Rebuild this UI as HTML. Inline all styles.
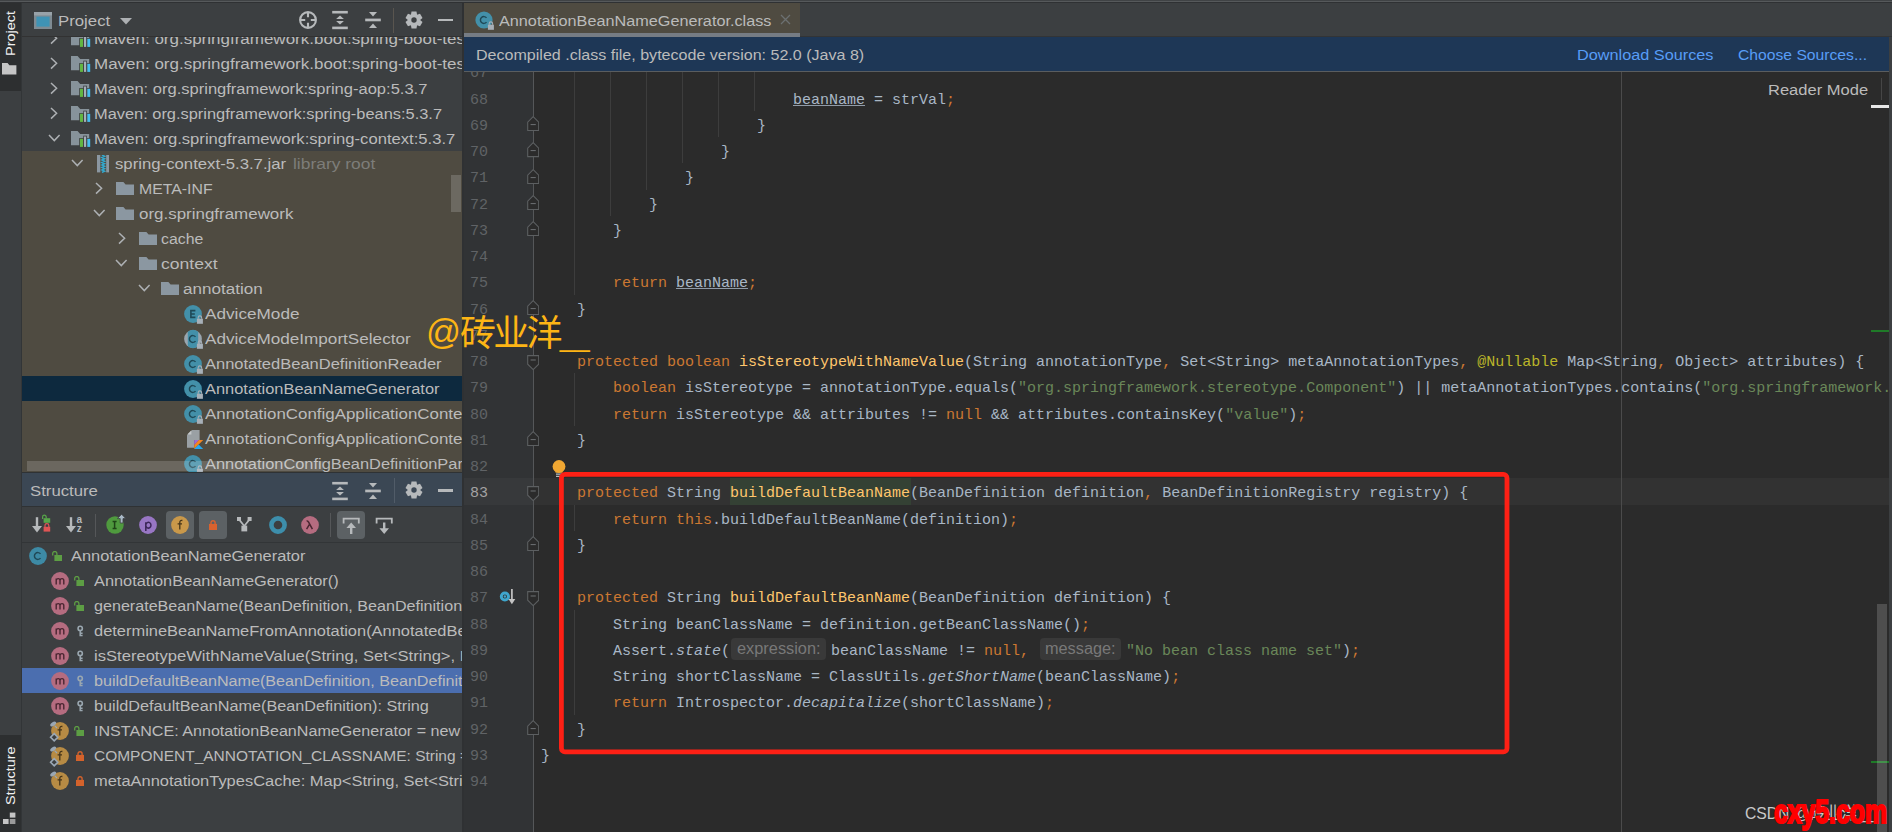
<!DOCTYPE html>
<html lang="en"><head><meta charset="utf-8"><title>AnnotationBeanNameGenerator.class</title>
<style>
html,body{margin:0;padding:0}
body{width:1892px;height:832px;overflow:hidden;background:#3c3f41;position:relative;font-family:"Liberation Sans",sans-serif}
.t{position:absolute;white-space:nowrap;line-height:20px;height:20px;transform-origin:0 50%;font-family:"Liberation Sans",sans-serif}
.vt{position:absolute;white-space:nowrap;font-size:13.5px;line-height:20px;height:20px;transform-origin:0 0;transform:rotate(-90deg) scaleX(1.07);font-family:"Liberation Sans",sans-serif}
.cl{position:absolute;white-space:pre;font-family:"Liberation Mono",monospace;font-size:15px;line-height:26px;height:26px;color:#a9b7c6}
.k{color:#cc7832}.m{color:#ffc66d}.s{color:#6a8759}.a{color:#bbb529}.u{text-decoration:underline;text-underline-offset:1px;text-decoration-thickness:1px;text-decoration-color:#909ba8}.i{font-style:italic}
.wm{position:absolute;white-space:nowrap;font-family:"Liberation Sans","Noto Sans CJK SC",sans-serif}
.imp{position:absolute;white-space:nowrap;font-family:"Liberation Sans",sans-serif;font-weight:bold;font-size:33px;line-height:44px;color:#ff0000;-webkit-text-stroke:2.2px #ff0000;transform-origin:0 50%}
</style></head>
<body>
<div style="position:absolute;left:0px;top:0px;width:1892px;height:1px;background:#404345;"></div><div style="position:absolute;left:0px;top:1px;width:1892px;height:1px;background:#56595b;"></div><div style="position:absolute;left:0px;top:2px;width:1892px;height:1px;background:#2f3133;"></div><div style="position:absolute;left:0px;top:3px;width:21px;height:88px;background:#2d2f30;"></div><div style="position:absolute;left:21px;top:3px;width:1px;height:829px;background:#323537;"></div><div style="position:absolute;left:0px;top:735px;width:21px;height:97px;background:#2d2f30;"></div><div class="vt" style="left:1px;top:56px;width:46px;color:#f0f0f0">Project</div><svg style="position:absolute;left:2.4px;top:63.4px;" width="14.4" height="11.6" viewBox="0 0 14.4 11.6"><path d="M0,0 H5.6 L7.4,2.3 H14.4 V11.6 H0 Z" fill="#c5c5c5"/></svg><div class="vt" style="left:1px;top:805px;width:58px;color:#f0f0f0">Structure</div><svg style="position:absolute;left:3px;top:812px;" width="12.6" height="12" viewBox="0 0 12.6 12"><rect x="0" y="7" width="5.6" height="5" fill="#c5c5c5"/><rect x="6.8" y="7" width="5.6" height="5" fill="#9a9a9a"/><rect x="6.8" y="0.6" width="5.6" height="5" fill="#c5c5c5"/></svg><div style="position:absolute;left:22px;top:36px;width:440px;height:1px;background:#323232;"></div><svg style="position:absolute;left:34px;top:12px;" width="18" height="17" viewBox="0 0 18 17"><rect x="0" y="0" width="18" height="17" fill="#7f8b93"/><rect x="0" y="0" width="18" height="3.4" fill="#98a2a9"/><rect x="2.4" y="4.6" width="13.2" height="10" fill="#3f93b5"/></svg><div class="t " style="left:57.8px;top:11px;font-size:15.5px;color:#bbbbbb;transform:scaleX(1.0819);">Project</div><svg style="position:absolute;left:120px;top:17.8px;" width="12" height="7" viewBox="0 0 12 7"><path d="M0,0 H12 L6,6.6 Z" fill="#adb0b3"/></svg><svg style="position:absolute;left:298px;top:9.6px;" width="20" height="20" viewBox="0 0 20 20"><circle cx="10" cy="10" r="7.9" fill="none" stroke="#b6b9bb" stroke-width="2.1"/><path d="M10,2.4 V7.2 M10,12.8 V17.6 M2.4,10 H7.2 M12.8,10 H17.6" stroke="#b6b9bb" stroke-width="2.1"/></svg><svg style="position:absolute;left:331px;top:10px;" width="18" height="20" viewBox="0 0 18 20"><rect x="1.2" y="0.9" width="15.6" height="2.6" fill="#b6b9bb"/><rect x="1.2" y="16.6" width="15.6" height="2.6" fill="#b6b9bb"/><path d="M9,5.4 L12.9,8.9 H5.1 Z" fill="#b6b9bb"/><path d="M9,14.6 L12.9,11.1 H5.1 Z" fill="#b6b9bb"/></svg><svg style="position:absolute;left:364px;top:10px;" width="18" height="20" viewBox="0 0 18 20"><rect x="1.2" y="8.6" width="15.6" height="2.7" fill="#b6b9bb"/><path d="M9,6.4 L13,2.1 H5 Z" fill="#b6b9bb"/><path d="M9,13.6 L13,17.9 H5 Z" fill="#b6b9bb"/></svg><div style="position:absolute;left:393.4px;top:8px;width:1px;height:25px;background:#59554f;"></div><svg style="position:absolute;left:404px;top:9.899999999999999px;" width="20" height="20" viewBox="0 0 20 20"><g transform="translate(10,10)"><path d="M-2.5,-8.4 H2.5 L3.2,-4.5 H-3.2 Z" fill="#b6b9bb" transform="rotate(0)"/><path d="M-2.5,-8.4 H2.5 L3.2,-4.5 H-3.2 Z" fill="#b6b9bb" transform="rotate(60)"/><path d="M-2.5,-8.4 H2.5 L3.2,-4.5 H-3.2 Z" fill="#b6b9bb" transform="rotate(120)"/><path d="M-2.5,-8.4 H2.5 L3.2,-4.5 H-3.2 Z" fill="#b6b9bb" transform="rotate(180)"/><path d="M-2.5,-8.4 H2.5 L3.2,-4.5 H-3.2 Z" fill="#b6b9bb" transform="rotate(240)"/><path d="M-2.5,-8.4 H2.5 L3.2,-4.5 H-3.2 Z" fill="#b6b9bb" transform="rotate(300)"/><circle r="6.1" fill="#b6b9bb"/><circle r="2.7" fill="#3c3f41"/></g></svg><div style="position:absolute;left:437.8px;top:18.6px;width:15.7px;height:2.6px;background:#b6b9bb;"></div><div style="position:absolute;left:22px;top:37px;width:440px;height:435px;overflow:hidden"><div style="position:absolute;left:0px;top:114px;width:440px;height:321px;background:#4f4b41;"></div><div style="position:absolute;left:0px;top:339px;width:440px;height:25px;background:#0d293e;"></div><svg style="position:absolute;left:27.2px;top:-6.1px;" width="9.6" height="14.6" viewBox="0 0 9.6 14.6"><polyline points="2,2 7.6,7.3 2,12.6" fill="none" stroke="#adb0b3" stroke-width="1.5"/></svg><svg style="position:absolute;left:48.9px;top:-6.0px;" width="20" height="16.8" viewBox="0 0 20 16.8"><path d="M0,0 H6.6 L9.2,2.9 H18.2 V14.2 H0 Z" fill="#87939b"/><rect x="8.2" y="7.1" width="4.6" height="9.6" fill="#3c3f41"/><rect x="12.3" y="4.7" width="3.6" height="12" fill="#3c3f41"/><rect x="15.5" y="7.1" width="4.5" height="9.6" fill="#3c3f41"/><rect x="8.95" y="7.8" width="3.05" height="8.1" fill="#62b543"/><rect x="13.0" y="5.5" width="2.15" height="10.4" fill="#a4b0b9"/><rect x="16.3" y="7.8" width="2.9" height="8.1" fill="#44bdf0"/></svg><div class="t " style="left:72.2px;top:-8px;font-size:15.5px;color:#bbbbbb;transform:scaleX(1.0958);">Maven: org.springframework.boot:spring-boot-test-autoconfigure:2.5.0</div><svg style="position:absolute;left:27.2px;top:18.9px;" width="9.6" height="14.6" viewBox="0 0 9.6 14.6"><polyline points="2,2 7.6,7.3 2,12.6" fill="none" stroke="#adb0b3" stroke-width="1.5"/></svg><svg style="position:absolute;left:48.9px;top:19.0px;" width="20" height="16.8" viewBox="0 0 20 16.8"><path d="M0,0 H6.6 L9.2,2.9 H18.2 V14.2 H0 Z" fill="#87939b"/><rect x="8.2" y="7.1" width="4.6" height="9.6" fill="#3c3f41"/><rect x="12.3" y="4.7" width="3.6" height="12" fill="#3c3f41"/><rect x="15.5" y="7.1" width="4.5" height="9.6" fill="#3c3f41"/><rect x="8.95" y="7.8" width="3.05" height="8.1" fill="#62b543"/><rect x="13.0" y="5.5" width="2.15" height="10.4" fill="#a4b0b9"/><rect x="16.3" y="7.8" width="2.9" height="8.1" fill="#44bdf0"/></svg><div class="t " style="left:72.2px;top:17px;font-size:15.5px;color:#bbbbbb;transform:scaleX(1.0958);">Maven: org.springframework.boot:spring-boot-test-autoconfigure:2.5.0</div><svg style="position:absolute;left:27.2px;top:43.900000000000006px;" width="9.6" height="14.6" viewBox="0 0 9.6 14.6"><polyline points="2,2 7.6,7.3 2,12.6" fill="none" stroke="#adb0b3" stroke-width="1.5"/></svg><svg style="position:absolute;left:48.9px;top:44.0px;" width="20" height="16.8" viewBox="0 0 20 16.8"><path d="M0,0 H6.6 L9.2,2.9 H18.2 V14.2 H0 Z" fill="#87939b"/><rect x="8.2" y="7.1" width="4.6" height="9.6" fill="#3c3f41"/><rect x="12.3" y="4.7" width="3.6" height="12" fill="#3c3f41"/><rect x="15.5" y="7.1" width="4.5" height="9.6" fill="#3c3f41"/><rect x="8.95" y="7.8" width="3.05" height="8.1" fill="#62b543"/><rect x="13.0" y="5.5" width="2.15" height="10.4" fill="#a4b0b9"/><rect x="16.3" y="7.8" width="2.9" height="8.1" fill="#44bdf0"/></svg><div class="t " style="left:72.2px;top:42px;font-size:15.5px;color:#bbbbbb;transform:scaleX(1.0661);">Maven: org.springframework:spring-aop:5.3.7</div><svg style="position:absolute;left:27.2px;top:68.9px;" width="9.6" height="14.6" viewBox="0 0 9.6 14.6"><polyline points="2,2 7.6,7.3 2,12.6" fill="none" stroke="#adb0b3" stroke-width="1.5"/></svg><svg style="position:absolute;left:48.9px;top:69.0px;" width="20" height="16.8" viewBox="0 0 20 16.8"><path d="M0,0 H6.6 L9.2,2.9 H18.2 V14.2 H0 Z" fill="#87939b"/><rect x="8.2" y="7.1" width="4.6" height="9.6" fill="#3c3f41"/><rect x="12.3" y="4.7" width="3.6" height="12" fill="#3c3f41"/><rect x="15.5" y="7.1" width="4.5" height="9.6" fill="#3c3f41"/><rect x="8.95" y="7.8" width="3.05" height="8.1" fill="#62b543"/><rect x="13.0" y="5.5" width="2.15" height="10.4" fill="#a4b0b9"/><rect x="16.3" y="7.8" width="2.9" height="8.1" fill="#44bdf0"/></svg><div class="t " style="left:72.2px;top:67px;font-size:15.5px;color:#bbbbbb;transform:scaleX(1.0574);">Maven: org.springframework:spring-beans:5.3.7</div><svg style="position:absolute;left:24.7px;top:96.2px;" width="14.6" height="9.6" viewBox="0 0 14.6 9.6"><polyline points="2,2 7.3,7.6 12.6,2" fill="none" stroke="#adb0b3" stroke-width="1.5"/></svg><svg style="position:absolute;left:48.9px;top:94.0px;" width="20" height="16.8" viewBox="0 0 20 16.8"><path d="M0,0 H6.6 L9.2,2.9 H18.2 V14.2 H0 Z" fill="#87939b"/><rect x="8.2" y="7.1" width="4.6" height="9.6" fill="#3c3f41"/><rect x="12.3" y="4.7" width="3.6" height="12" fill="#3c3f41"/><rect x="15.5" y="7.1" width="4.5" height="9.6" fill="#3c3f41"/><rect x="8.95" y="7.8" width="3.05" height="8.1" fill="#62b543"/><rect x="13.0" y="5.5" width="2.15" height="10.4" fill="#a4b0b9"/><rect x="16.3" y="7.8" width="2.9" height="8.1" fill="#44bdf0"/></svg><div class="t " style="left:72.2px;top:92px;font-size:15.5px;color:#bbbbbb;transform:scaleX(1.0726);">Maven: org.springframework:spring-context:5.3.7</div><svg style="position:absolute;left:47.7px;top:121.2px;" width="14.6" height="9.6" viewBox="0 0 14.6 9.6"><polyline points="2,2 7.3,7.6 12.6,2" fill="none" stroke="#adb0b3" stroke-width="1.5"/></svg><svg style="position:absolute;left:75px;top:118.19999999999999px;" width="12.4" height="17.4" viewBox="0 0 12.4 17.4"><rect x="0" y="0" width="3.3" height="17.4" fill="#8b97a1"/><rect x="9.2" y="0" width="3.1" height="17.4" fill="#8b97a1"/><path d="M4.9,0 L4.9,0.00 L7.6,1.24 L4.9,2.49 L7.6,3.73 L4.9,4.97 L7.6,6.21 L4.9,7.46 L7.6,8.70 L4.9,9.94 L7.6,11.19 L4.9,12.43 L7.6,13.67 L4.9,14.91 L7.6,16.16 L4.9,17.40 " fill="none" stroke="#35a8cc" stroke-width="1.5"/></svg><div class="t " style="left:93.4px;top:117px;font-size:15.5px;color:#bbbbbb;transform:scaleX(1.0799);">spring-context-5.3.7.jar</div><div class="t " style="left:271.4px;top:117px;font-size:15.5px;color:#7d7d79;transform:scaleX(1.1240);">library root</div><svg style="position:absolute;left:72.2px;top:143.89999999999998px;" width="9.6" height="14.6" viewBox="0 0 9.6 14.6"><polyline points="2,2 7.6,7.3 2,12.6" fill="none" stroke="#adb0b3" stroke-width="1.5"/></svg><svg style="position:absolute;left:94px;top:144.5px;" width="18.2" height="13.6" viewBox="0 0 18.2 13.6"><path d="M0,0 H7.4 L9.6,2.6 H18.2 V13.6 H0 Z" fill="#8b97a1"/></svg><div class="t " style="left:116.6px;top:142px;font-size:15.5px;color:#bbbbbb;transform:scaleX(1.0216);">META-INF</div><svg style="position:absolute;left:69.7px;top:171.2px;" width="14.6" height="9.6" viewBox="0 0 14.6 9.6"><polyline points="2,2 7.3,7.6 12.6,2" fill="none" stroke="#adb0b3" stroke-width="1.5"/></svg><svg style="position:absolute;left:94px;top:169.5px;" width="18.2" height="13.6" viewBox="0 0 18.2 13.6"><path d="M0,0 H7.4 L9.6,2.6 H18.2 V13.6 H0 Z" fill="#8b97a1"/></svg><div class="t " style="left:116.6px;top:167px;font-size:15.5px;color:#bbbbbb;transform:scaleX(1.0929);">org.springframework</div><svg style="position:absolute;left:94.7px;top:193.89999999999998px;" width="9.6" height="14.6" viewBox="0 0 9.6 14.6"><polyline points="2,2 7.6,7.3 2,12.6" fill="none" stroke="#adb0b3" stroke-width="1.5"/></svg><svg style="position:absolute;left:116.6px;top:194.5px;" width="18.2" height="13.6" viewBox="0 0 18.2 13.6"><path d="M0,0 H7.4 L9.6,2.6 H18.2 V13.6 H0 Z" fill="#8b97a1"/></svg><div class="t " style="left:138.6px;top:192px;font-size:15.5px;color:#bbbbbb;transform:scaleX(1.0248);">cache</div><svg style="position:absolute;left:92.2px;top:221.2px;" width="14.6" height="9.6" viewBox="0 0 14.6 9.6"><polyline points="2,2 7.3,7.6 12.6,2" fill="none" stroke="#adb0b3" stroke-width="1.5"/></svg><svg style="position:absolute;left:116.6px;top:219.5px;" width="18.2" height="13.6" viewBox="0 0 18.2 13.6"><path d="M0,0 H7.4 L9.6,2.6 H18.2 V13.6 H0 Z" fill="#8b97a1"/></svg><div class="t " style="left:138.6px;top:217px;font-size:15.5px;color:#bbbbbb;transform:scaleX(1.1324);">context</div><svg style="position:absolute;left:114.7px;top:246.2px;" width="14.6" height="9.6" viewBox="0 0 14.6 9.6"><polyline points="2,2 7.3,7.6 12.6,2" fill="none" stroke="#adb0b3" stroke-width="1.5"/></svg><svg style="position:absolute;left:139.2px;top:244.5px;" width="18.2" height="13.6" viewBox="0 0 18.2 13.6"><path d="M0,0 H7.4 L9.6,2.6 H18.2 V13.6 H0 Z" fill="#8b97a1"/></svg><div class="t " style="left:161.4px;top:242px;font-size:15.5px;color:#bbbbbb;transform:scaleX(1.1007);">annotation</div><svg style="position:absolute;left:159px;top:265.0px;" width="24" height="24" viewBox="0 0 24 24"><circle cx="12" cy="12" r="8.9" fill="#4390a9"/><path d="M14.4,8.6 H9.9 V15.4 H14.4 M9.9,12 H13.8" fill="none" stroke="#1f4856" stroke-width="1.6"/><path d="M17.2,16.8 V15.6 a1.7,1.7 0 0 1 3.4,0 V16.8" fill="none" stroke="#a7b0b8" stroke-width="1.1"/><rect x="15.9" y="16.7" width="6" height="5.1" fill="#a7b0b8"/></svg><div class="t " style="left:183.3px;top:267px;font-size:15.5px;color:#bbbbbb;transform:scaleX(1.1079);">AdviceMode</div><svg style="position:absolute;left:159px;top:290.0px;" width="24" height="24" viewBox="0 0 24 24"><circle cx="12" cy="12" r="8.9" fill="#9aa5ae"/><path d="M6.8,4.699999999999999 A8.9,8.9 0 0 1 17.2,4.699999999999999 V19.299999999999997 A8.9,8.9 0 0 1 6.8,19.299999999999997 Z" fill="#4390a9"/><path d="M14.5,9.9 A3.4,3.4 0 1 0 14.5,14.1" fill="none" stroke="#1f4856" stroke-width="1.45"/><path d="M17.2,16.8 V15.6 a1.7,1.7 0 0 1 3.4,0 V16.8" fill="none" stroke="#a7b0b8" stroke-width="1.1"/><rect x="15.9" y="16.7" width="6" height="5.1" fill="#a7b0b8"/></svg><div class="t " style="left:183.3px;top:292px;font-size:15.5px;color:#bbbbbb;transform:scaleX(1.1054);">AdviceModeImportSelector</div><svg style="position:absolute;left:159px;top:315.0px;" width="24" height="24" viewBox="0 0 24 24"><circle cx="12" cy="12" r="8.9" fill="#4390a9"/><path d="M14.5,9.9 A3.4,3.4 0 1 0 14.5,14.1" fill="none" stroke="#1f4856" stroke-width="1.45"/><path d="M17.2,16.8 V15.6 a1.7,1.7 0 0 1 3.4,0 V16.8" fill="none" stroke="#a7b0b8" stroke-width="1.1"/><rect x="15.9" y="16.7" width="6" height="5.1" fill="#a7b0b8"/></svg><div class="t " style="left:183.3px;top:317px;font-size:15.5px;color:#bbbbbb;transform:scaleX(1.0642);">AnnotatedBeanDefinitionReader</div><svg style="position:absolute;left:159px;top:340.0px;" width="24" height="24" viewBox="0 0 24 24"><circle cx="12" cy="12" r="8.9" fill="#4390a9"/><path d="M14.5,9.9 A3.4,3.4 0 1 0 14.5,14.1" fill="none" stroke="#1f4856" stroke-width="1.45"/><path d="M17.2,16.8 V15.6 a1.7,1.7 0 0 1 3.4,0 V16.8" fill="none" stroke="#a7b0b8" stroke-width="1.1"/><rect x="15.9" y="16.7" width="6" height="5.1" fill="#a7b0b8"/></svg><div class="t " style="left:183.3px;top:342px;font-size:15.5px;color:#bbbbbb;transform:scaleX(1.0589);">AnnotationBeanNameGenerator</div><svg style="position:absolute;left:159px;top:365.0px;" width="24" height="24" viewBox="0 0 24 24"><circle cx="12" cy="12" r="8.9" fill="#4390a9"/><path d="M14.5,9.9 A3.4,3.4 0 1 0 14.5,14.1" fill="none" stroke="#1f4856" stroke-width="1.45"/><path d="M17.2,16.8 V15.6 a1.7,1.7 0 0 1 3.4,0 V16.8" fill="none" stroke="#a7b0b8" stroke-width="1.1"/><rect x="15.9" y="16.7" width="6" height="5.1" fill="#a7b0b8"/></svg><div class="t " style="left:183.3px;top:367px;font-size:15.5px;color:#bbbbbb;transform:scaleX(1.0901);">AnnotationConfigApplicationContext</div><svg style="position:absolute;left:164.7px;top:393.1px;" width="17" height="19.2" viewBox="0 0 17 19.2"><path d="M5.2,0 H12.6 V10 H7 V17.8 H0 V5.2 Z" fill="#9aa0a4"/><path d="M4.4,0.2 V4.4 H0.2 Z" fill="#c3c7ca"/><g transform="translate(7.2,10)"><path d="M4.5,0 L0,4.75 V9 L4.5,4.4 L9,0 Z" fill="#f5841f"/><path d="M0,0 H4.5 L0,4.9 Z" fill="#9d6bd6"/><path d="M0,9 L4.5,4.4 L9,9 Z" fill="#27a7ee"/></g></svg><div class="t " style="left:183.3px;top:392px;font-size:15.5px;color:#bbbbbb;transform:scaleX(1.0901);">AnnotationConfigApplicationContextExtensionsKt</div><svg style="position:absolute;left:159px;top:415.0px;" width="24" height="24" viewBox="0 0 24 24"><circle cx="12" cy="12" r="8.9" fill="#4390a9"/><path d="M14.5,9.9 A3.4,3.4 0 1 0 14.5,14.1" fill="none" stroke="#1f4856" stroke-width="1.45"/><path d="M17.2,16.8 V15.6 a1.7,1.7 0 0 1 3.4,0 V16.8" fill="none" stroke="#a7b0b8" stroke-width="1.1"/><rect x="15.9" y="16.7" width="6" height="5.1" fill="#a7b0b8"/></svg><div class="t " style="left:183.3px;top:417px;font-size:15.5px;color:#bbbbbb;transform:scaleX(1.0575);">AnnotationConfigBeanDefinitionParser</div><div style="position:absolute;left:429px;top:138px;width:10px;height:37px;background:rgba(255,255,255,0.17);"></div><div style="position:absolute;left:5px;top:424px;width:295.5px;height:9.5px;background:rgba(255,255,255,0.16);"></div></div><div style="position:absolute;left:22px;top:472px;width:440px;height:1px;background:#2f3234;"></div><div style="position:absolute;left:22px;top:473px;width:440px;height:33.5px;background:#3b4754;"></div><div style="position:absolute;left:22px;top:506px;width:440px;height:1px;background:#2f3234;"></div><div style="position:absolute;left:22px;top:542px;width:440px;height:1px;background:#323537;"></div><div class="t " style="left:30.0px;top:481px;font-size:15.5px;color:#bbbbbb;transform:scaleX(1.0797);">Structure</div><svg style="position:absolute;left:331px;top:480.5px;" width="18" height="20" viewBox="0 0 18 20"><rect x="1.2" y="0.9" width="15.6" height="2.6" fill="#b6b9bb"/><rect x="1.2" y="16.6" width="15.6" height="2.6" fill="#b6b9bb"/><path d="M9,5.4 L12.9,8.9 H5.1 Z" fill="#b6b9bb"/><path d="M9,14.6 L12.9,11.1 H5.1 Z" fill="#b6b9bb"/></svg><svg style="position:absolute;left:364px;top:480.5px;" width="18" height="20" viewBox="0 0 18 20"><rect x="1.2" y="8.6" width="15.6" height="2.7" fill="#b6b9bb"/><path d="M9,6.4 L13,2.1 H5 Z" fill="#b6b9bb"/><path d="M9,13.6 L13,17.9 H5 Z" fill="#b6b9bb"/></svg><div style="position:absolute;left:393.5px;top:478px;width:1px;height:25px;background:#515c68;"></div><svg style="position:absolute;left:404px;top:480.4px;" width="20" height="20" viewBox="0 0 20 20"><g transform="translate(10,10)"><path d="M-2.5,-8.4 H2.5 L3.2,-4.5 H-3.2 Z" fill="#b6b9bb" transform="rotate(0)"/><path d="M-2.5,-8.4 H2.5 L3.2,-4.5 H-3.2 Z" fill="#b6b9bb" transform="rotate(60)"/><path d="M-2.5,-8.4 H2.5 L3.2,-4.5 H-3.2 Z" fill="#b6b9bb" transform="rotate(120)"/><path d="M-2.5,-8.4 H2.5 L3.2,-4.5 H-3.2 Z" fill="#b6b9bb" transform="rotate(180)"/><path d="M-2.5,-8.4 H2.5 L3.2,-4.5 H-3.2 Z" fill="#b6b9bb" transform="rotate(240)"/><path d="M-2.5,-8.4 H2.5 L3.2,-4.5 H-3.2 Z" fill="#b6b9bb" transform="rotate(300)"/><circle r="6.1" fill="#b6b9bb"/><circle r="2.7" fill="#3b4754"/></g></svg><div style="position:absolute;left:437.8px;top:489.2px;width:15.7px;height:2.6px;background:#b6b9bb;"></div><div style="position:absolute;left:166px;top:511px;width:28px;height:28px;background:#5c6164;border-radius:4px"></div><div style="position:absolute;left:198.6px;top:511px;width:28px;height:28px;background:#5c6164;border-radius:4px"></div><div style="position:absolute;left:337.3px;top:511px;width:27.8px;height:28px;background:#5c6164;border-radius:4px"></div><div style="position:absolute;left:94.5px;top:513.5px;width:1px;height:23.5px;background:#555759;"></div><div style="position:absolute;left:330px;top:513px;width:1px;height:24px;background:#555759;"></div><svg style="position:absolute;left:32px;top:514px;" width="20" height="22" viewBox="0 0 20 22"><path d="M5,3.2 V16.5" stroke="#b6b9bb" stroke-width="2.4"/><path d="M0,12 L5,18.4 L10,12 Z" fill="#b6b9bb"/><rect x="11.6" y="4.2" width="6.6" height="4.6" fill="#57a64a"/><path d="M10.6,5 V3 a1.8,1.8 0 0 1 3.6,0 V4.4" fill="none" stroke="#57a64a" stroke-width="1.2"/><rect x="11.6" y="12.8" width="6.6" height="4.8" fill="#e05555"/><path d="M13,13 V11.6 a1.9,1.9 0 0 1 3.8,0 V13" fill="none" stroke="#e05555" stroke-width="1.2"/></svg><svg style="position:absolute;left:65.5px;top:514px;" width="20" height="22" viewBox="0 0 20 22"><path d="M5,3.2 V16.5" stroke="#b6b9bb" stroke-width="2.4"/><path d="M0,12 L5,18.4 L10,12 Z" fill="#b6b9bb"/><text x="10.6" y="8.6" font-family="Liberation Sans, sans-serif" font-size="10" font-weight="bold" fill="#b6b9bb">a</text><text x="10.8" y="17.6" font-family="Liberation Sans, sans-serif" font-size="10" font-weight="bold" fill="#b6b9bb">z</text></svg><svg style="position:absolute;left:102.6px;top:512.9px;" width="24" height="24" viewBox="0 0 24 24"><circle cx="12" cy="12" r="8.7" fill="#4f9a3e"/><path d="M9.6,8.6 H13.6 M11.6,8.6 V15.4 M9.6,15.4 H13.6" stroke="#1f4417" stroke-width="1.5" fill="none"/></svg><svg style="position:absolute;left:116.6px;top:514.2px;" width="10" height="10" viewBox="0 0 10 10"><path d="M4.6,0.2 L8.8,4.6 H6 V9 H3.2 V4.6 H0.4 Z" fill="#a9b8c6" stroke="#3c3f41" stroke-width="0.8"/></svg><svg style="position:absolute;left:136px;top:513px;" width="24" height="24" viewBox="0 0 24 24"><circle cx="12" cy="12" r="8.9" fill="#9876c4"/><path d="M9.8,9.2 V18 M9.8,12.6 a2.6,2.9 0 1 0 0,-0.8" fill="none" stroke="#3b2657" stroke-width="1.5"/></svg><svg style="position:absolute;left:168px;top:513px;" width="24" height="24" viewBox="0 0 24 24"><circle cx="12" cy="12" r="8.9" fill="#c9984a"/><path d="M14.4,7.5 Q11.8,6.9 11.8,9.4 V16.4 M9.6,10.9 H14" fill="none" stroke="#46351a" stroke-width="1.3"/></svg><svg style="position:absolute;left:209.0px;top:519.9px;" width="8.4" height="10.6" viewBox="0 0 8.4 10.6"><rect x="0" y="3.9" width="8.1" height="6.4" fill="#d9622e"/><path d="M2,4.2 V2.8 a2.05,2.05 0 0 1 4.1,0 V4.2" fill="none" stroke="#d9622e" stroke-width="1.4"/></svg><svg style="position:absolute;left:237px;top:516.6px;" width="15" height="15" viewBox="0 0 15 15"><rect x="0" y="0" width="4" height="4" fill="#b6b9bb"/><rect x="10.6" y="0" width="4" height="4" fill="#b6b9bb"/><rect x="4.4" y="8.6" width="5.8" height="5.8" fill="#b6b9bb"/><path d="M2,2.4 L7.3,9 L12.6,2.4" stroke="#b6b9bb" stroke-width="1.7" fill="none"/></svg><svg style="position:absolute;left:268px;top:515px;" width="20" height="20" viewBox="0 0 20 20"><circle cx="10" cy="10" r="6.6" fill="none" stroke="#3d8eab" stroke-width="4.6"/></svg><svg style="position:absolute;left:298.2px;top:513px;" width="24" height="24" viewBox="0 0 24 24"><circle cx="12" cy="12" r="8.9" fill="#b56c80"/><path d="M8.6,8 Q10,7.6 10.6,9.2 L14.4,16.2 M11.6,11.2 L8.6,16.2" fill="none" stroke="#4a2631" stroke-width="1.5"/></svg><svg style="position:absolute;left:342px;top:516px;" width="19" height="19" viewBox="0 0 19 19"><path d="M1.6,7.4 V2.6 H16.8 V7.4" fill="none" stroke="#b6b9bb" stroke-width="1.8"/><path d="M9.2,6.4 L14,12 H10.4 V18 H8 V12 H4.4 Z" fill="#b6b9bb"/></svg><svg style="position:absolute;left:375px;top:516px;" width="19" height="19" viewBox="0 0 19 19"><path d="M1.6,7.4 V2.6 H16.8 V7.4" fill="none" stroke="#b6b9bb" stroke-width="1.8"/><path d="M9.2,18 L14,12.2 H10.4 V6.6 H8 V12.2 H4.4 Z" fill="#b6b9bb"/></svg><div style="position:absolute;left:22px;top:543px;width:440px;height:289px;overflow:hidden"><div style="position:absolute;left:0px;top:125px;width:440px;height:25px;background:#4b6eaf;"></div><svg style="position:absolute;left:4px;top:0.7000000000000455px;" width="24" height="24" viewBox="0 0 24 24"><circle cx="12" cy="12" r="8.9" fill="#3d8aa5"/><path d="M14.5,9.9 A3.4,3.4 0 1 0 14.5,14.1" fill="none" stroke="#1f4856" stroke-width="1.45"/></svg><svg style="position:absolute;left:29.799999999999997px;top:7.5px;" width="10.6" height="10.4" viewBox="0 0 10.6 10.4"><rect x="2.4" y="4" width="8" height="6.1" fill="#5d9e44"/><path d="M0.7,4.6 V2.6 a2.1,2.1 0 0 1 4.2,0 V4.2" fill="none" stroke="#5d9e44" stroke-width="1.3"/></svg><div class="t " style="left:48.8px;top:3px;font-size:15.5px;color:#bbbbbb;transform:scaleX(1.0585);">AnnotationBeanNameGenerator</div><svg style="position:absolute;left:26px;top:25.700000000000045px;" width="24" height="24" viewBox="0 0 24 24"><circle cx="12" cy="12" r="8.9" fill="#b56c80"/><path d="M8.2,15.6 V9.4 M8.2,11.2 Q8.6,9.6 10.2,9.6 Q12,9.6 12,11.6 V15.6 M12,11.4 Q12.4,9.6 14,9.6 Q15.8,9.6 15.8,11.6 V15.6" fill="none" stroke="#4a2631" stroke-width="1.4"/></svg><svg style="position:absolute;left:51.599999999999994px;top:32.5px;" width="10.6" height="10.4" viewBox="0 0 10.6 10.4"><rect x="2.4" y="4" width="8" height="6.1" fill="#5d9e44"/><path d="M0.7,4.6 V2.6 a2.1,2.1 0 0 1 4.2,0 V4.2" fill="none" stroke="#5d9e44" stroke-width="1.3"/></svg><div class="t " style="left:71.6px;top:28px;font-size:15.5px;color:#bbbbbb;transform:scaleX(1.0553);">AnnotationBeanNameGenerator()</div><svg style="position:absolute;left:26px;top:50.700000000000045px;" width="24" height="24" viewBox="0 0 24 24"><circle cx="12" cy="12" r="8.9" fill="#b56c80"/><path d="M8.2,15.6 V9.4 M8.2,11.2 Q8.6,9.6 10.2,9.6 Q12,9.6 12,11.6 V15.6 M12,11.4 Q12.4,9.6 14,9.6 Q15.8,9.6 15.8,11.6 V15.6" fill="none" stroke="#4a2631" stroke-width="1.4"/></svg><svg style="position:absolute;left:51.599999999999994px;top:57.5px;" width="10.6" height="10.4" viewBox="0 0 10.6 10.4"><rect x="2.4" y="4" width="8" height="6.1" fill="#5d9e44"/><path d="M0.7,4.6 V2.6 a2.1,2.1 0 0 1 4.2,0 V4.2" fill="none" stroke="#5d9e44" stroke-width="1.3"/></svg><div class="t " style="left:71.6px;top:53px;font-size:15.5px;color:#bbbbbb;transform:scaleX(1.0394);">generateBeanName(BeanDefinition, BeanDefinitionRegistry): String</div><svg style="position:absolute;left:26px;top:75.70000000000005px;" width="24" height="24" viewBox="0 0 24 24"><circle cx="12" cy="12" r="8.9" fill="#b56c80"/><path d="M8.2,15.6 V9.4 M8.2,11.2 Q8.6,9.6 10.2,9.6 Q12,9.6 12,11.6 V15.6 M12,11.4 Q12.4,9.6 14,9.6 Q15.8,9.6 15.8,11.6 V15.6" fill="none" stroke="#4a2631" stroke-width="1.4"/></svg><svg style="position:absolute;left:54.8px;top:82.10000000000005px;" width="7" height="12" viewBox="0 0 7 12"><circle cx="3.2" cy="3.4" r="2.15" fill="none" stroke="#9aa7b0" stroke-width="1.6"/><path d="M3.2,5.6 V11.2 M3.2,8.3 H5.6 M3.2,10.5 H5.6" stroke="#9aa7b0" stroke-width="1.5" fill="none"/></svg><div class="t " style="left:71.6px;top:78px;font-size:15.5px;color:#bbbbbb;transform:scaleX(1.0599);">determineBeanNameFromAnnotation(AnnotatedBeanDefinition): String</div><svg style="position:absolute;left:26px;top:100.70000000000005px;" width="24" height="24" viewBox="0 0 24 24"><circle cx="12" cy="12" r="8.9" fill="#b56c80"/><path d="M8.2,15.6 V9.4 M8.2,11.2 Q8.6,9.6 10.2,9.6 Q12,9.6 12,11.6 V15.6 M12,11.4 Q12.4,9.6 14,9.6 Q15.8,9.6 15.8,11.6 V15.6" fill="none" stroke="#4a2631" stroke-width="1.4"/></svg><svg style="position:absolute;left:54.8px;top:107.10000000000005px;" width="7" height="12" viewBox="0 0 7 12"><circle cx="3.2" cy="3.4" r="2.15" fill="none" stroke="#9aa7b0" stroke-width="1.6"/><path d="M3.2,5.6 V11.2 M3.2,8.3 H5.6 M3.2,10.5 H5.6" stroke="#9aa7b0" stroke-width="1.5" fill="none"/></svg><div class="t " style="left:71.6px;top:103px;font-size:15.5px;color:#bbbbbb;transform:scaleX(1.0703);">isStereotypeWithNameValue(String, Set&lt;String&gt;, Map&lt;String, Object&gt;): boolean</div><svg style="position:absolute;left:26px;top:125.70000000000005px;" width="24" height="24" viewBox="0 0 24 24"><circle cx="12" cy="12" r="8.9" fill="#b56c80"/><path d="M8.2,15.6 V9.4 M8.2,11.2 Q8.6,9.6 10.2,9.6 Q12,9.6 12,11.6 V15.6 M12,11.4 Q12.4,9.6 14,9.6 Q15.8,9.6 15.8,11.6 V15.6" fill="none" stroke="#4a2631" stroke-width="1.4"/></svg><svg style="position:absolute;left:54.8px;top:132.10000000000005px;" width="7" height="12" viewBox="0 0 7 12"><circle cx="3.2" cy="3.4" r="2.15" fill="none" stroke="#9aa7b0" stroke-width="1.6"/><path d="M3.2,5.6 V11.2 M3.2,8.3 H5.6 M3.2,10.5 H5.6" stroke="#9aa7b0" stroke-width="1.5" fill="none"/></svg><div class="t " style="left:71.6px;top:128px;font-size:15.5px;color:#bbbbbb;transform:scaleX(1.0408);">buildDefaultBeanName(BeanDefinition, BeanDefinitionRegistry): String</div><svg style="position:absolute;left:26px;top:150.70000000000005px;" width="24" height="24" viewBox="0 0 24 24"><circle cx="12" cy="12" r="8.9" fill="#b56c80"/><path d="M8.2,15.6 V9.4 M8.2,11.2 Q8.6,9.6 10.2,9.6 Q12,9.6 12,11.6 V15.6 M12,11.4 Q12.4,9.6 14,9.6 Q15.8,9.6 15.8,11.6 V15.6" fill="none" stroke="#4a2631" stroke-width="1.4"/></svg><svg style="position:absolute;left:54.8px;top:157.10000000000005px;" width="7" height="12" viewBox="0 0 7 12"><circle cx="3.2" cy="3.4" r="2.15" fill="none" stroke="#9aa7b0" stroke-width="1.6"/><path d="M3.2,5.6 V11.2 M3.2,8.3 H5.6 M3.2,10.5 H5.6" stroke="#9aa7b0" stroke-width="1.5" fill="none"/></svg><div class="t " style="left:71.6px;top:153px;font-size:15.5px;color:#bbbbbb;transform:scaleX(1.0477);">buildDefaultBeanName(BeanDefinition): String</div><svg style="position:absolute;left:26px;top:175.70000000000005px;" width="24" height="24" viewBox="0 0 24 24"><circle cx="12" cy="12" r="8.9" fill="#b78b44"/><path d="M14.4,7.5 Q11.8,6.9 11.8,9.4 V16.4 M9.6,10.9 H14" fill="none" stroke="#46351a" stroke-width="1.3"/></svg><svg style="position:absolute;left:27.1px;top:176.90000000000003px;" width="10" height="10" viewBox="0 0 10 10"><ellipse cx="4.2" cy="4.0" rx="3.3" ry="1.9" fill="#9aa7b4" transform="rotate(-35 4.2 4.0)"/><path d="M5.6,5.6 L8,8" stroke="#9aa7b4" stroke-width="1.2"/></svg><svg style="position:absolute;left:27.4px;top:188.60000000000005px;" width="11" height="11" viewBox="0 0 11 11"><path d="M5.2,1.6 L8.8,5.2 L5.2,8.8 L1.6,5.2 Z" fill="#3c3f41" stroke="#9aa7b4" stroke-width="1.6"/></svg><svg style="position:absolute;left:51.599999999999994px;top:182.5px;" width="10.6" height="10.4" viewBox="0 0 10.6 10.4"><rect x="2.4" y="4" width="8" height="6.1" fill="#5d9e44"/><path d="M0.7,4.6 V2.6 a2.1,2.1 0 0 1 4.2,0 V4.2" fill="none" stroke="#5d9e44" stroke-width="1.3"/></svg><div class="t " style="left:71.6px;top:178px;font-size:15.5px;color:#bbbbbb;transform:scaleX(1.0385);">INSTANCE: AnnotationBeanNameGenerator = new AnnotationBeanNameGenerator()</div><svg style="position:absolute;left:26px;top:200.70000000000005px;" width="24" height="24" viewBox="0 0 24 24"><circle cx="12" cy="12" r="8.9" fill="#b78b44"/><path d="M14.4,7.5 Q11.8,6.9 11.8,9.4 V16.4 M9.6,10.9 H14" fill="none" stroke="#46351a" stroke-width="1.3"/></svg><svg style="position:absolute;left:27.1px;top:201.90000000000003px;" width="10" height="10" viewBox="0 0 10 10"><ellipse cx="4.2" cy="4.0" rx="3.3" ry="1.9" fill="#9aa7b4" transform="rotate(-35 4.2 4.0)"/><path d="M5.6,5.6 L8,8" stroke="#9aa7b4" stroke-width="1.2"/></svg><svg style="position:absolute;left:27.4px;top:213.60000000000005px;" width="11" height="11" viewBox="0 0 11 11"><path d="M5.2,1.6 L8.8,5.2 L5.2,8.8 L1.6,5.2 Z" fill="#3c3f41" stroke="#9aa7b4" stroke-width="1.6"/></svg><svg style="position:absolute;left:53.89999999999999px;top:207.70000000000005px;" width="8.4" height="10.6" viewBox="0 0 8.4 10.6"><rect x="0" y="3.9" width="8.1" height="6.4" fill="#d4622b"/><path d="M2,4.2 V2.8 a2.05,2.05 0 0 1 4.1,0 V4.2" fill="none" stroke="#d4622b" stroke-width="1.4"/></svg><div class="t " style="left:71.6px;top:203px;font-size:15.5px;color:#bbbbbb;transform:scaleX(0.9988);">COMPONENT_ANNOTATION_CLASSNAME: String = "org.springframework.stereotype.Component"</div><svg style="position:absolute;left:26px;top:225.70000000000005px;" width="24" height="24" viewBox="0 0 24 24"><circle cx="12" cy="12" r="8.9" fill="#b78b44"/><path d="M14.4,7.5 Q11.8,6.9 11.8,9.4 V16.4 M9.6,10.9 H14" fill="none" stroke="#46351a" stroke-width="1.3"/></svg><svg style="position:absolute;left:27.1px;top:226.90000000000003px;" width="10" height="10" viewBox="0 0 10 10"><ellipse cx="4.2" cy="4.0" rx="3.3" ry="1.9" fill="#9aa7b4" transform="rotate(-35 4.2 4.0)"/><path d="M5.6,5.6 L8,8" stroke="#9aa7b4" stroke-width="1.2"/></svg><svg style="position:absolute;left:53.89999999999999px;top:232.70000000000005px;" width="8.4" height="10.6" viewBox="0 0 8.4 10.6"><rect x="0" y="3.9" width="8.1" height="6.4" fill="#d4622b"/><path d="M2,4.2 V2.8 a2.05,2.05 0 0 1 4.1,0 V4.2" fill="none" stroke="#d4622b" stroke-width="1.4"/></svg><div class="t " style="left:71.6px;top:228px;font-size:15.5px;color:#bbbbbb;transform:scaleX(1.0615);">metaAnnotationTypesCache: Map&lt;String, Set&lt;String&gt;&gt; = new ConcurrentHashMap()</div></div><div style="position:absolute;left:462px;top:3px;width:2px;height:829px;background:#2f3133;"></div><div style="position:absolute;left:464px;top:3px;width:1428px;height:34px;background:#3c3f41;"></div><div style="position:absolute;left:800px;top:36px;width:1092px;height:1px;background:#323436;"></div><div style="position:absolute;left:464px;top:3px;width:336px;height:30px;background:#4f4b41;"></div><div style="position:absolute;left:464px;top:33px;width:336px;height:4px;background:#767c84;"></div><svg style="position:absolute;left:472px;top:8.3px;" width="24" height="24" viewBox="0 0 24 24"><circle cx="12" cy="12" r="8.6" fill="#4390a9"/><path d="M14.5,9.9 A3.4,3.4 0 1 0 14.5,14.1" fill="none" stroke="#1f4856" stroke-width="1.45"/><path d="M17.2,16.8 V15.6 a1.7,1.7 0 0 1 3.4,0 V16.8" fill="none" stroke="#a7b0b8" stroke-width="1.1"/><rect x="15.9" y="16.7" width="6" height="5.1" fill="#a7b0b8"/></svg><div class="t " style="left:498.6px;top:11px;font-size:15.5px;color:#bbbbbb;transform:scaleX(1.0468);">AnnotationBeanNameGenerator.class</div><svg style="position:absolute;left:779.5px;top:14.4px;" width="11" height="11" viewBox="0 0 11 11"><path d="M1,1 L10,10 M10,1 L1,10" stroke="#6c7071" stroke-width="1.25"/></svg><div style="position:absolute;left:464px;top:37px;width:1425px;height:34px;background:#1e3756;"></div><div style="position:absolute;left:464px;top:71px;width:1425px;height:1px;background:#5a5d5f;"></div><div class="t " style="left:475.8px;top:45px;font-size:15.5px;color:#bbbbbb;transform:scaleX(1.0358);">Decompiled .class file, bytecode version: 52.0 (Java 8)</div><div class="t " style="left:1577.2px;top:45px;font-size:15.5px;color:#589df6;transform:scaleX(1.0491);">Download Sources</div><div class="t " style="left:1738.4px;top:45px;font-size:15.5px;color:#589df6;transform:scaleX(1.0116);">Choose Sources...</div><div style="position:absolute;left:464px;top:72px;width:1425px;height:760px;overflow:hidden;background:#2b2b2b"><div style="position:absolute;left:-464px;top:-72px"><div style="position:absolute;left:464px;top:72px;width:69px;height:760px;background:#313335;"></div><div style="position:absolute;left:464px;top:478.25px;width:69px;height:26.25px;background:#37393b;"></div><div style="position:absolute;left:533px;top:478.25px;width:1356px;height:26.25px;background:#323232;"></div><div style="position:absolute;left:729.5px;top:478.25px;width:181.0px;height:26.25px;background:#344134;"></div><div style="position:absolute;left:1621px;top:72px;width:1px;height:760px;background:#4b4b4b;"></div><div style="position:absolute;left:533px;top:72px;width:1px;height:760px;background:#555759;"></div><div style="position:absolute;left:574.3px;top:58.25px;width:1px;height:236.25px;background:#3d3d3d;"></div><div style="position:absolute;left:610.3px;top:58.25px;width:1px;height:157.5px;background:#3d3d3d;"></div><div style="position:absolute;left:646.3px;top:58.25px;width:1px;height:131.25px;background:#3d3d3d;"></div><div style="position:absolute;left:682.3px;top:58.25px;width:1px;height:105.0px;background:#3d3d3d;"></div><div style="position:absolute;left:718.3px;top:58.25px;width:1px;height:78.75px;background:#3d3d3d;"></div><div style="position:absolute;left:754.3px;top:58.25px;width:1px;height:52.5px;background:#3d3d3d;"></div><div style="position:absolute;left:574.3px;top:373.25px;width:1px;height:52.5px;background:#3d3d3d;"></div><div style="position:absolute;left:574.3px;top:504.5px;width:1px;height:26.25px;background:#3d3d3d;"></div><div style="position:absolute;left:574.3px;top:609.5px;width:1px;height:105.0px;background:#3d3d3d;"></div><div class="cl" style="left:470px;top:61px;color:#606366">67</div><div class="cl" style="left:470px;top:88px;color:#606366">68</div><div class="cl" style="left:470px;top:114px;color:#606366">69</div><div class="cl" style="left:470px;top:140px;color:#606366">70</div><div class="cl" style="left:470px;top:166px;color:#606366">71</div><div class="cl" style="left:470px;top:193px;color:#606366">72</div><div class="cl" style="left:470px;top:219px;color:#606366">73</div><div class="cl" style="left:470px;top:245px;color:#606366">74</div><div class="cl" style="left:470px;top:271px;color:#606366">75</div><div class="cl" style="left:470px;top:298px;color:#606366">76</div><div class="cl" style="left:470px;top:324px;color:#606366">77</div><div class="cl" style="left:470px;top:350px;color:#606366">78</div><div class="cl" style="left:470px;top:376px;color:#606366">79</div><div class="cl" style="left:470px;top:403px;color:#606366">80</div><div class="cl" style="left:470px;top:429px;color:#606366">81</div><div class="cl" style="left:470px;top:455px;color:#606366">82</div><div class="cl" style="left:470px;top:481px;color:#a4a3a3">83</div><div class="cl" style="left:470px;top:508px;color:#606366">84</div><div class="cl" style="left:470px;top:534px;color:#606366">85</div><div class="cl" style="left:470px;top:560px;color:#606366">86</div><div class="cl" style="left:470px;top:586px;color:#606366">87</div><div class="cl" style="left:470px;top:613px;color:#606366">88</div><div class="cl" style="left:470px;top:639px;color:#606366">89</div><div class="cl" style="left:470px;top:665px;color:#606366">90</div><div class="cl" style="left:470px;top:691px;color:#606366">91</div><div class="cl" style="left:470px;top:718px;color:#606366">92</div><div class="cl" style="left:470px;top:744px;color:#606366">93</div><div class="cl" style="left:470px;top:770px;color:#606366">94</div><svg style="position:absolute;left:527px;top:116.05px;" width="12.4" height="15.4" viewBox="0 0 12.4 15.4"><path d="M6.2,0.6 L11.7,6.2 V14.6 H0.7 V6.2 Z" fill="#2b2b2b" stroke="#5c5f61" stroke-width="1.1"/><path d="M3.6,8.6 H8.8" stroke="#6e7174" stroke-width="1"/></svg><svg style="position:absolute;left:527px;top:142.3px;" width="12.4" height="15.4" viewBox="0 0 12.4 15.4"><path d="M6.2,0.6 L11.7,6.2 V14.6 H0.7 V6.2 Z" fill="#2b2b2b" stroke="#5c5f61" stroke-width="1.1"/><path d="M3.6,8.6 H8.8" stroke="#6e7174" stroke-width="1"/></svg><svg style="position:absolute;left:527px;top:168.55px;" width="12.4" height="15.4" viewBox="0 0 12.4 15.4"><path d="M6.2,0.6 L11.7,6.2 V14.6 H0.7 V6.2 Z" fill="#2b2b2b" stroke="#5c5f61" stroke-width="1.1"/><path d="M3.6,8.6 H8.8" stroke="#6e7174" stroke-width="1"/></svg><svg style="position:absolute;left:527px;top:194.8px;" width="12.4" height="15.4" viewBox="0 0 12.4 15.4"><path d="M6.2,0.6 L11.7,6.2 V14.6 H0.7 V6.2 Z" fill="#2b2b2b" stroke="#5c5f61" stroke-width="1.1"/><path d="M3.6,8.6 H8.8" stroke="#6e7174" stroke-width="1"/></svg><svg style="position:absolute;left:527px;top:221.05px;" width="12.4" height="15.4" viewBox="0 0 12.4 15.4"><path d="M6.2,0.6 L11.7,6.2 V14.6 H0.7 V6.2 Z" fill="#2b2b2b" stroke="#5c5f61" stroke-width="1.1"/><path d="M3.6,8.6 H8.8" stroke="#6e7174" stroke-width="1"/></svg><svg style="position:absolute;left:527px;top:299.8px;" width="12.4" height="15.4" viewBox="0 0 12.4 15.4"><path d="M6.2,0.6 L11.7,6.2 V14.6 H0.7 V6.2 Z" fill="#2b2b2b" stroke="#5c5f61" stroke-width="1.1"/><path d="M3.6,8.6 H8.8" stroke="#6e7174" stroke-width="1"/></svg><svg style="position:absolute;left:527px;top:431.05px;" width="12.4" height="15.4" viewBox="0 0 12.4 15.4"><path d="M6.2,0.6 L11.7,6.2 V14.6 H0.7 V6.2 Z" fill="#2b2b2b" stroke="#5c5f61" stroke-width="1.1"/><path d="M3.6,8.6 H8.8" stroke="#6e7174" stroke-width="1"/></svg><svg style="position:absolute;left:527px;top:536.05px;" width="12.4" height="15.4" viewBox="0 0 12.4 15.4"><path d="M6.2,0.6 L11.7,6.2 V14.6 H0.7 V6.2 Z" fill="#2b2b2b" stroke="#5c5f61" stroke-width="1.1"/><path d="M3.6,8.6 H8.8" stroke="#6e7174" stroke-width="1"/></svg><svg style="position:absolute;left:527px;top:719.8px;" width="12.4" height="15.4" viewBox="0 0 12.4 15.4"><path d="M6.2,0.6 L11.7,6.2 V14.6 H0.7 V6.2 Z" fill="#2b2b2b" stroke="#5c5f61" stroke-width="1.1"/><path d="M3.6,8.6 H8.8" stroke="#6e7174" stroke-width="1"/></svg><svg style="position:absolute;left:527px;top:354.7px;" width="12.4" height="15.4" viewBox="0 0 12.4 15.4"><path d="M0.7,0.6 H11.7 V9.2 L6.2,14.6 L0.7,9.2 Z" fill="#2b2b2b" stroke="#5c5f61" stroke-width="1.1"/><path d="M3.6,5 H8.8" stroke="#6e7174" stroke-width="1"/></svg><svg style="position:absolute;left:527px;top:485.95px;" width="12.4" height="15.4" viewBox="0 0 12.4 15.4"><path d="M0.7,0.6 H11.7 V9.2 L6.2,14.6 L0.7,9.2 Z" fill="#2b2b2b" stroke="#5c5f61" stroke-width="1.1"/><path d="M3.6,5 H8.8" stroke="#6e7174" stroke-width="1"/></svg><svg style="position:absolute;left:527px;top:590.95px;" width="12.4" height="15.4" viewBox="0 0 12.4 15.4"><path d="M0.7,0.6 H11.7 V9.2 L6.2,14.6 L0.7,9.2 Z" fill="#2b2b2b" stroke="#5c5f61" stroke-width="1.1"/><path d="M3.6,5 H8.8" stroke="#6e7174" stroke-width="1"/></svg><svg style="position:absolute;left:498px;top:587px;" width="20" height="20" viewBox="0 0 20 20"><circle cx="6.9" cy="9.5" r="3.6" fill="none" stroke="#3fa5cc" stroke-width="3"/><circle cx="6.9" cy="9.5" r="1.2" fill="#3fa5cc"/><path d="M13.9,1.9 V13" stroke="#c4c4c4" stroke-width="1.7"/><path d="M10.5,12 H17.3 L13.9,17.2 Z" fill="#c4c4c4"/></svg><svg style="position:absolute;left:551px;top:459px;" width="16" height="20" viewBox="0 0 16 20"><circle cx="8" cy="7.5" r="6.4" fill="#f0a732"/><path d="M4.4,11 H11.6 V13.6 H4.4 Z" fill="#f0a732"/><path d="M5,15.2 H11 M5,17.4 H11" stroke="#b8bcbf" stroke-width="1.3"/></svg></div><div style="position:absolute;left:-464px;top:-72px"><div class="cl" style="left:793.00px;top:88px"><span class="u">beanName</span> = strVal<span class="k">;</span></div><div class="cl" style="left:757.00px;top:114px">}</div><div class="cl" style="left:721.00px;top:140px">}</div><div class="cl" style="left:685.00px;top:166px">}</div><div class="cl" style="left:649.00px;top:193px">}</div><div class="cl" style="left:613.00px;top:219px">}</div><div class="cl" style="left:613.00px;top:271px"><span class="k">return </span><span class="u">beanName</span><span class="k">;</span></div><div class="cl" style="left:577.00px;top:298px">}</div><div class="cl" style="left:577.00px;top:350px"><span class="k">protected boolean </span><span class="m">isStereotypeWithNameValue</span>(String annotationType<span class="k">, </span>Set&lt;String&gt; metaAnnotationTypes<span class="k">, </span><span class="a">@Nullable</span> Map&lt;String<span class="k">, </span>Object&gt; attributes) {</div><div class="cl" style="left:613.00px;top:376px"><span class="k">boolean </span>isStereotype = annotationType.equals(<span class="s">"org.springframework.stereotype.Component"</span>) || metaAnnotationTypes.contains(<span class="s">"org.springframework.stereotype.Component"</span>)<span class="k">;</span></div><div class="cl" style="left:613.00px;top:403px"><span class="k">return </span>isStereotype &amp;&amp; attributes != <span class="k">null</span> &amp;&amp; attributes.containsKey(<span class="s">"value"</span>)<span class="k">;</span></div><div class="cl" style="left:577.00px;top:429px">}</div><div class="cl" style="left:577.00px;top:481px"><span class="k">protected </span>String <span class="m">buildDefaultBeanName</span>(BeanDefinition definition<span class="k">, </span>BeanDefinitionRegistry registry) {</div><div class="cl" style="left:613.00px;top:508px"><span class="k">return this</span>.buildDefaultBeanName(definition)<span class="k">;</span></div><div class="cl" style="left:577.00px;top:534px">}</div><div class="cl" style="left:577.00px;top:586px"><span class="k">protected </span>String <span class="m">buildDefaultBeanName</span>(BeanDefinition definition) {</div><div class="cl" style="left:613.00px;top:613px">String beanClassName = definition.getBeanClassName()<span class="k">;</span></div><div class="cl" style="left:613.00px;top:665px">String shortClassName = ClassUtils.<span class="i">getShortName</span>(beanClassName)<span class="k">;</span></div><div class="cl" style="left:613.00px;top:691px"><span class="k">return </span>Introspector.<span class="i">decapitalize</span>(shortClassName)<span class="k">;</span></div><div class="cl" style="left:577.00px;top:718px">}</div><div class="cl" style="left:541.00px;top:744px">}</div><div class="cl" style="left:613.00px;top:639px">Assert.<span class="i">state</span>(</div><div style="position:absolute;left:731.3px;top:638.15px;width:95px;height:21.6px;background:#393939;border-radius:4px"></div><div class="t " style="left:736.9px;top:639px;font-size:16px;color:#787878;transform:scaleX(1.0217);">expression:</div><div class="cl" style="left:831.00px;top:639px">beanClassName != <span class="k">null, </span></div><div style="position:absolute;left:1040.2px;top:638.15px;width:81px;height:21.6px;background:#393939;border-radius:4px"></div><div class="t " style="left:1045.2px;top:639px;font-size:16px;color:#787878;transform:scaleX(1.0177);">message:</div><div class="cl" style="left:1126.00px;top:639px"><span class="s">"No bean class name set"</span>)<span class="k">;</span></div></div><svg style="position:absolute;left:94.20000000000005px;top:399.45px;" width="952.3999999999999" height="284.25000000000006" viewBox="0 0 952.3999999999999 284.25000000000006"><rect x="3.4" y="3.4" width="945.60" height="277.45" rx="3.6" ry="3.6" fill="none" stroke="#fd2015" stroke-width="4.8"/></svg><div style="position:absolute;left:-464px;top:-72px"><div class="t " style="left:1767.9px;top:80px;font-size:15.5px;color:#bbbbbb;transform:scaleX(1.0658);">Reader Mode</div><div style="position:absolute;left:1881px;top:78px;width:1px;height:22px;background:#464646;"></div><div style="position:absolute;left:1871px;top:105px;width:17.5px;height:3px;background:#e6e6e6;"></div><div style="position:absolute;left:1871px;top:330px;width:17.5px;height:2px;background:#1f7a28;"></div><div style="position:absolute;left:1871px;top:761px;width:17.5px;height:2px;background:#1f7a28;"></div><div style="position:absolute;left:1877px;top:604px;width:10px;height:228px;background:rgba(255,255,255,0.17);"></div></div></div><div class="wm" style="left:426px;top:310px;font-size:34.5px;line-height:44px;color:#fdb515;">@</div><div class="wm" style="left:460px;top:312px;font-size:36px;line-height:44px;letter-spacing:-2.7px;color:#fdb515;">砖业洋</div><div class="wm" style="left:559.8px;top:319px;font-size:27px;line-height:36px;color:#fdb515;">__</div><div class="wm" style="left:1744.5px;top:803px;font-size:16.5px;line-height:20px;color:#c9c9c9;transform-origin:0 50%;transform:scaleX(0.95)">CSDN @砖业洋__</div><div class="imp" style="left:1774px;top:790px;transform:scaleX(0.7505)">cxy5.com</div>
</body></html>
